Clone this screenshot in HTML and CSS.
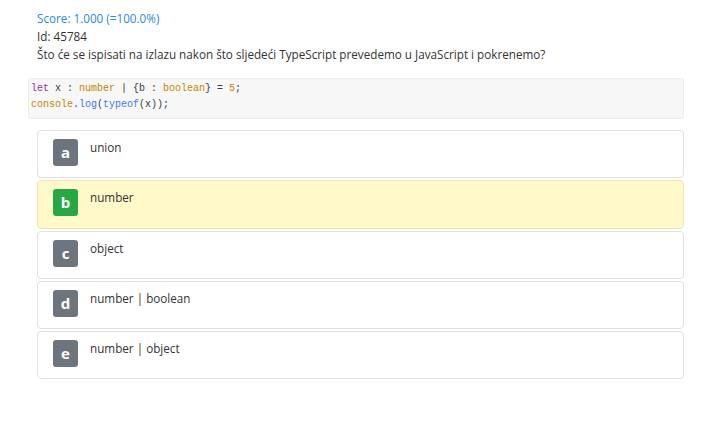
FILE: index.html
```html
<!DOCTYPE html>
<html>
<head>
<meta charset="utf-8">
<link rel="stylesheet" href="styles.css">
</head>
<body>
<div class="page">
  <div class="line score">Score: 1.000 (=100.0%)</div>
  <div class="line">Id: 45784</div>
  <div class="line">Što će se ispisati na izlazu nakon što sljedeći TypeScript prevedemo u JavaScript i pokrenemo?</div>
  <pre class="code"><span class="kw">let</span> x : <span class="ty">number</span> | {b : <span class="ty">boolean</span>} = <span class="num">5</span>;
<span class="ty">console</span>.<span class="fn">log</span>(<span class="fn">typeof</span>(x));</pre>
  <div class="options">
    <div class="opt"><span class="badge">a</span><span class="txt">union</span></div>
    <div class="opt correct"><span class="badge green">b</span><span class="txt">number</span></div>
    <div class="opt"><span class="badge">c</span><span class="txt">object</span></div>
    <div class="opt"><span class="badge">d</span><span class="txt">number | boolean</span></div>
    <div class="opt"><span class="badge">e</span><span class="txt">number | object</span></div>
  </div>
</div>
</body>
</html>
```
FILE: styles.css
```css
html, body { margin: 0; padding: 0; background: #fff; }
body { font-family: "Open Sans", "Noto Sans", sans-serif; font-size: 11.7px; color: #333; }
.page { padding: 9px 36px 0 28px; }
.line { line-height: 18px; margin-left: 9px; white-space: nowrap; }
.score { color: #2b8ad6; }
.code {
  margin: 15px 0 0 0;
  padding: 2px 0 5px 2px;
  background: #f7f7f7;
  border: 1px solid #ececec;
  border-radius: 2px;
  font-family: "Liberation Mono", monospace;
  font-size: 10px;
  line-height: 16px;
  color: #383a42;
}
.kw { color: #a626a4; }
.ty { color: #c18401; }
.num { color: #c18401; }
.fn { color: #4078f2; }
.options { margin: 11px 0 0 9px; display: flex; flex-direction: column; gap: 2px; }
.opt {
  border: 1px solid #e0e0e0;
  border-radius: 4px;
  display: flex;
  align-items: flex-start;
  padding: 8px 15px 0 15px;
  box-sizing: border-box;
  height: 48.3px;
}
.opt.correct { background: #fff9c9; border-color: #ede5b5; }
.badge {
  width: 25px; height: 27px;
  background: #6c757d;
  color: #fff;
  border-radius: 3px;
  font-weight: bold;
  font-size: 15px;
  display: flex; align-items: center; justify-content: center;
  line-height: 1;
}
.badge.green { background: #28a745; }
.txt { margin-left: 12px; line-height: 16px; }
```
